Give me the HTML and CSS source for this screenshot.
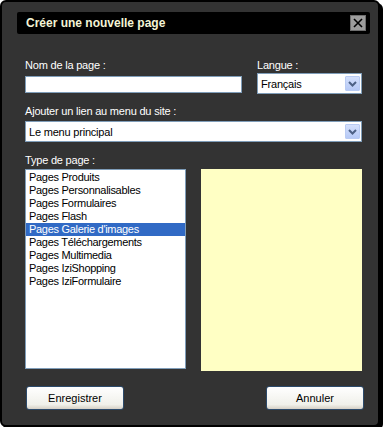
FILE: index.html
```html
<!DOCTYPE html>
<html lang="fr">
<head>
  <meta charset="UTF-8">
  <title>Créer une nouvelle page</title>
  <link rel="stylesheet" href="styles.css">
</head>
<body>
  <div class="dialog">
    <div class="titlebar">
      <span class="title">Créer une nouvelle page</span>
      <span class="close-btn">
        <svg width="10" height="10" viewBox="0 0 10 10"><path d="M1 1 L9 9 M9 1 L1 9" stroke="#000" stroke-width="1.6"/></svg>
      </span>
    </div>

    <div class="content">
      <div class="row-top">
        <div class="field field-name">
          <label class="label">Nom de la page :</label>
          <div class="textbox"></div>
        </div>
        <div class="field field-lang">
          <label class="label label-lang">Langue :</label>
          <div class="select">
            <span class="select-text">Français</span>
            <span class="select-arrow">
              <svg width="9" height="6" viewBox="0 0 9 6"><path d="M1 1 L4.5 4.5 L8 1" fill="none" stroke="#4d6185" stroke-width="2"/></svg>
            </span>
          </div>
        </div>
      </div>

      <div class="field field-menu">
        <label class="label label-menu">Ajouter un lien au menu du site :</label>
        <div class="select">
          <span class="select-text">Le menu principal</span>
          <span class="select-arrow">
            <svg width="9" height="6" viewBox="0 0 9 6"><path d="M1 1 L4.5 4.5 L8 1" fill="none" stroke="#4d6185" stroke-width="2"/></svg>
          </span>
        </div>
      </div>

      <label class="label label-type">Type de page :</label>
      <div class="row-list">
        <ul class="listbox">
          <li>Pages Produits</li>
          <li>Pages Personnalisables</li>
          <li>Pages Formulaires</li>
          <li>Pages Flash</li>
          <li class="selected">Pages Galerie d'images</li>
          <li>Pages Téléchargements</li>
          <li>Pages Multimedia</li>
          <li>Pages IziShopping</li>
          <li>Pages IziFormulaire</li>
        </ul>
        <div class="preview"></div>
      </div>

      <div class="buttons">
        <button class="btn">Enregistrer</button>
        <button class="btn">Annuler</button>
      </div>
    </div>
  </div>
</body>
</html>
```

FILE: styles.css
```css
body {
  margin: 0;
  background-color: #ffffff;
  font-family: "Liberation Sans", Arial, sans-serif;
}

.dialog {
  width: 376px;
  height: 413px;
  background-color: #333333;
  border: 2px solid #000000;
  border-radius: 6px;
  box-shadow: 3px 3px 0 #000000;
  padding-top: 10px;
}

.titlebar {
  margin: 0 8px 0 15px;
  height: 22px;
  background-color: #000000;
  border-radius: 2px;
  display: flex;
  align-items: center;
  justify-content: space-between;
  padding: 0 4px 0 9px;
}

.title {
  color: #f4f4d6;
  font-size: 12px;
  font-weight: bold;
}

.close-btn {
  width: 14px;
  height: 14px;
  background-color: #9c9c9c;
  border: 1px solid #6e6e6e;
  display: flex;
  align-items: center;
  justify-content: center;
}

.content {
  padding: 0 16px 0 23px;
}

.label {
  display: block;
  color: #ffffff;
  font-size: 11px;
  line-height: 14px;
  letter-spacing: -0.2px;
}

.row-top {
  display: flex;
  align-items: flex-end;
  gap: 15px;
  margin-top: 24px;
}

.field-name {
  width: 217px;
}

.field-lang {
  width: 105px;
}

.textbox {
  height: 15px;
  margin-top: 4px;
  background-color: #ffffff;
  border: 1px solid #7f9db9;
  margin-bottom: 1px;
}

.label-lang {
  margin-bottom: 1px;
}

.select {
  height: 19px;
  background-color: #ffffff;
  border: 1px solid #7f9db9;
  display: flex;
  align-items: center;
  justify-content: space-between;
  padding: 0 1px 0 3px;
}

.select-text {
  color: #000000;
  font-size: 11px;
  letter-spacing: -0.2px;
}

.select-arrow {
  width: 15px;
  height: 15px;
  background: linear-gradient(#d4e0fc, #b6c9f6);
  border: 1px solid #b9cbf3;
  border-radius: 1px;
  box-sizing: border-box;
  display: flex;
  align-items: center;
  justify-content: center;
}

.field-menu {
  margin-top: 10px;
}

.label-menu {
  margin-bottom: 3px;
}

.label-type {
  margin-top: 11px;
  margin-bottom: 2px;
}

.row-list {
  display: flex;
  gap: 15px;
  align-items: flex-start;
}

.listbox {
  width: 159px;
  height: 197px;
  margin: 0;
  padding: 1px 0 0 0;
  list-style: none;
  background-color: #ffffff;
  border: 1px solid #7f9db9;
}

.listbox li {
  font-size: 11px;
  line-height: 13px;
  height: 13px;
  padding-left: 3px;
  color: #000000;
  letter-spacing: -0.3px;
}

.listbox li.selected {
  background-color: #316ac5;
  color: #ffffff;
}

.preview {
  width: 161px;
  height: 202px;
  background-color: #ffffc4;
}

.buttons {
  display: flex;
  justify-content: space-between;
  margin: 15px -2px 0 0;
  padding-left: 1px;
}

.btn {
  width: 98px;
  height: 24px;
  font-family: "Liberation Sans", Arial, sans-serif;
  font-size: 11px;
  color: #000000;
  background: linear-gradient(#ffffff, #f0f0ea 80%, #d6d0c5);
  border: 1px solid #2c4a6b;
  border-radius: 3px;
  padding: 0;
}
```
